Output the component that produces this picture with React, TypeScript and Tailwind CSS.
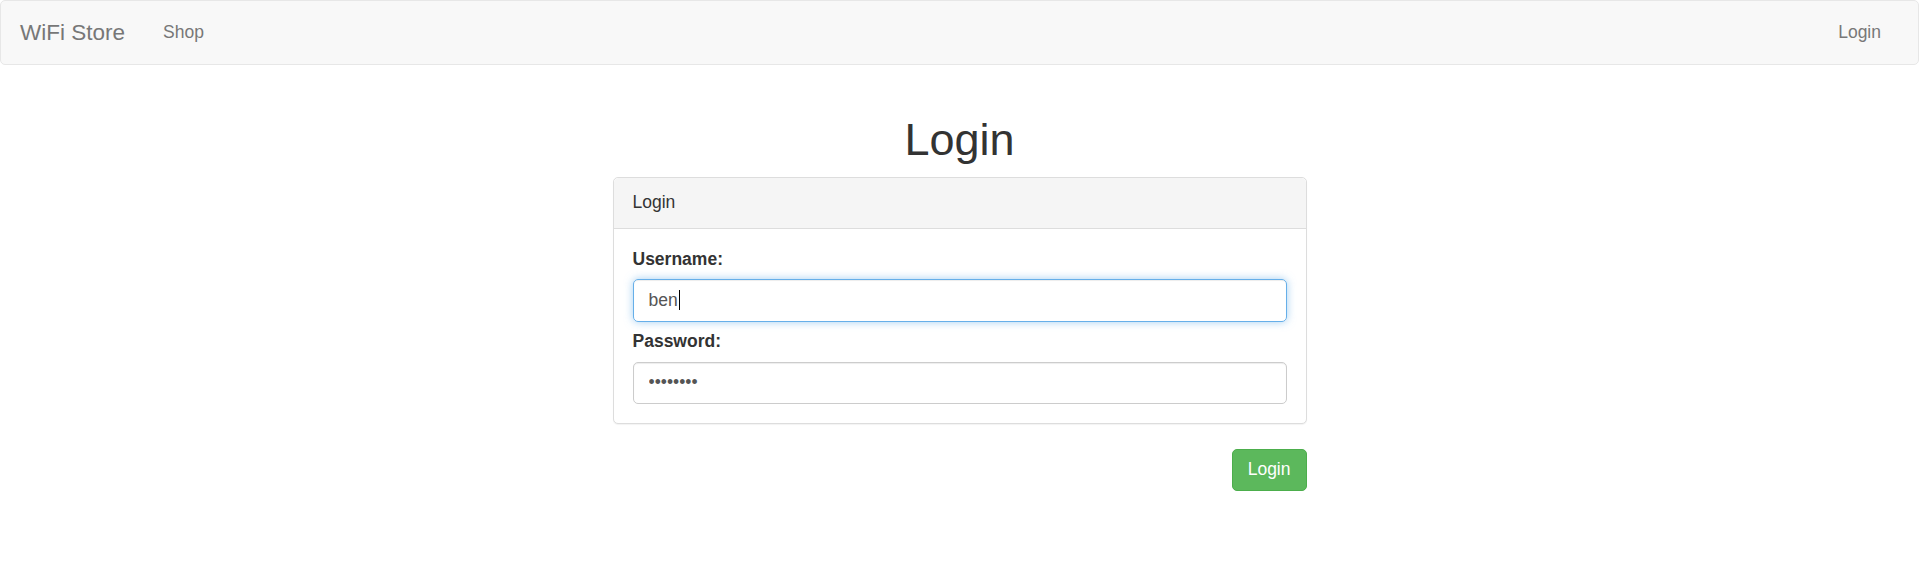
export default function App() {
  return (
    <div className="min-h-screen bg-white font-['Liberation_Sans',Arial,sans-serif] text-[17.5px] leading-[25px] text-[#333]">
      {/* navbar */}
      <nav className="h-[65px] flex items-center justify-between rounded-[5px] border border-[#e7e7e7] bg-[#f8f8f8] mb-[25px]">
        <div className="flex items-center">
          <a className="pl-[19px] pr-[19px] text-[22.5px] leading-[25px] text-[#777]">WiFi Store</a>
          <a className="px-[19px] text-[#777]">Shop</a>
        </div>
        <a className="px-[19px] mr-[18px] text-[#777]">Login</a>
      </nav>

      <div className="mx-auto w-[694px] flex flex-col">
        <h1 className="mt-[25px] mb-[12.5px] text-center text-[45px] leading-[49.5px] font-medium text-[#333]">Login</h1>

        <div className="rounded-[5px] border border-[#ddd] bg-white shadow-[0_1px_1px_rgba(0,0,0,0.05)]">
          <div className="rounded-t-[5px] border-b border-[#ddd] bg-[#f5f5f5] px-[19px] pt-[12px] pb-[12.5px] text-[#333]">Login</div>
          <div className="px-[19px] pt-[18px] pb-[18.5px]">
            <label className="block font-bold mb-[7.5px]">Username:</label>
            <div className="flex items-center h-[42.5px] rounded-[5px] border border-[#66afe9] px-[15px] text-[#555] shadow-[inset_0_1px_1px_rgba(0,0,0,0.075),0_0_8px_rgba(102,175,233,0.6)]">
              <span>ben</span>
              <span className="ml-[1px] h-[20px] w-px bg-black" />
            </div>
            <label className="block font-bold mt-[7.5px] mb-[7.5px]">Password:</label>
            <input
              type="password"
              readOnly
              value="password"
              className="block w-full h-[42.5px] rounded-[5px] border border-[#ccc] px-[15px] text-[#555] outline-none shadow-[inset_0_1px_1px_rgba(0,0,0,0.075)]"
            />
          </div>
        </div>

        <div className="flex justify-end mt-[25px]">
          <button className="h-[42.5px] rounded-[5px] border border-[#4cae4c] bg-[#5cb85c] px-[15px] text-white">Login</button>
        </div>
      </div>
    </div>
  );
}
